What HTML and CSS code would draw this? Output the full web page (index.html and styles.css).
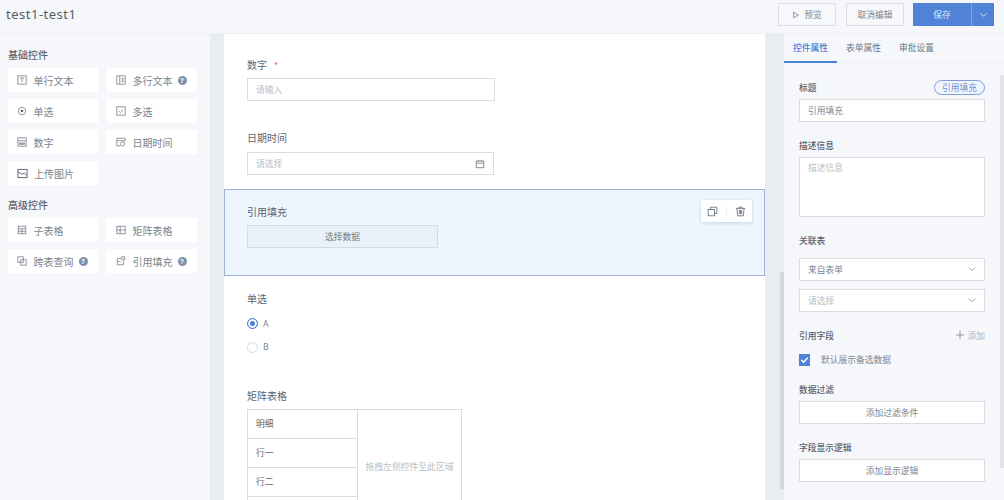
FILE: index.html
```html
<!DOCTYPE html>
<html lang="zh">
<head>
<meta charset="utf-8">
<title>test1-test1</title>
<link rel="stylesheet" href="styles.css">
</head>
<body>
<div class="app">
  <header class="topbar">
    <div class="title">test1-test1</div>
    <div class="actions">
      <button class="btn"><svg class="ic-play" viewBox="0 0 10 10"><path d="M2 1.500 8 5 2 8.500Z"/></svg>预览</button>
      <button class="btn">取消编辑</button>
      <div class="save"><span class="save-main">保存</span><span class="save-arrow"><svg viewBox="0 0 10 10"><path d="M1.500 3.500 5 7 8.500 3.500"/></svg></span></div>
    </div>
  </header>
  <div class="main">
    <aside class="palette">
      <h3 class="pal-title">基础控件</h3>
      <div class="pal-grid">
        <div class="pal-item"><svg class="pi" viewBox="0 0 12 12"><rect x="1" y="1" width="10" height="10"/><path d="M3.500 3.500h5M6 3.500v5"/></svg>单行文本</div>
        <div class="pal-item"><svg class="pi" viewBox="0 0 12 12"><rect x="1" y="1" width="10" height="10"/><path d="M4.500 1v10M6.500 4h3M6.500 6h3M6.500 8h3"/></svg>多行文本<span class="help">?</span></div>
        <div class="pal-item"><svg class="pi" viewBox="0 0 12 12"><circle cx="6" cy="6" r="4.500"/><circle class="fill" cx="6" cy="6" r="1.600"/></svg>单选</div>
        <div class="pal-item"><svg class="pi" viewBox="0 0 12 12"><rect x="1" y="1" width="10" height="10"/><path d="M3.500 6 5.500 8 8.500 4"/></svg>多选</div>
        <div class="pal-item"><svg class="pi" viewBox="0 0 12 12"><rect x="1" y="1" width="10" height="10"/><path d="M1 4.500h10M3 7h1.500v2H3zM5.500 7H7v2H5.500zM8 7h1v2H8z"/></svg>数字</div>
        <div class="pal-item"><svg class="pi" viewBox="0 0 12 12"><path d="M5 10.500H1v-9h10V5M1 4.500h10"/><circle cx="8" cy="8.300" r="2.500"/></svg>日期时间</div>
        <div class="pal-item"><svg class="pi wide" viewBox="0 0 12 12"><rect x="1" y="1.500" width="10" height="9"/><path d="M1 4 5.500 7 8 5.500 11 8"/></svg>上传图片</div>
      </div>
      <h3 class="pal-title second">高级控件</h3>
      <div class="pal-grid">
        <div class="pal-item"><svg class="pi" viewBox="0 0 12 12"><rect x="1.500" y="1.500" width="9" height="9"/><path d="M1.500 4.500h9M1.500 7.500h9M6 4.500v6"/></svg>子表格</div>
        <div class="pal-item"><svg class="pi" viewBox="0 0 12 12"><rect x="1" y="1.500" width="10" height="9"/><path d="M1 6h10M5 1.500v9"/></svg>矩阵表格</div>
        <div class="pal-item"><svg class="pi" viewBox="0 0 12 12"><rect x="1" y="1" width="6.500" height="6.500"/><rect x="4.500" y="4.500" width="6.500" height="6.500"/></svg>跨表查询<span class="help">?</span></div>
        <div class="pal-item"><svg class="pi" viewBox="0 0 12 12"><path d="M6 3H1.500v7.500h7.500V6M1.500 6.500h4"/><rect x="7" y="1" width="3.500" height="3.500"/></svg>引用填充<span class="help">?</span></div>
      </div>
    </aside>

    <section class="canvas-wrap">
      <div class="canvas">
        <div class="field f-num">
          <div class="f-label">数字<span class="req">*</span></div>
          <div class="inp">请输入</div>
        </div>
        <div class="field f-date">
          <div class="f-label">日期时间</div>
          <div class="inp inp-date">请选择<svg class="cal" viewBox="0 0 12 12"><rect x="1.500" y="2.500" width="9" height="8"/><path d="M1.500 5h9M4 1v2M8 1v2"/></svg></div>
        </div>
        <div class="field-sel">
          <div class="f-label">引用填充</div>
          <div class="pick">选择数据</div>
          <div class="tools">
            <svg class="tool" viewBox="0 0 14 14"><rect x="1.500" y="4.500" width="8" height="8"/><path d="M4.500 4.500v-3h8v8h-3"/></svg>
            <span class="tool-sep"></span>
            <svg class="tool" viewBox="0 0 14 14"><path d="M1 3h12M5 3V1.500h4V3M2.500 3l.8 9.500h7.400l.8-9.500M5.500 5v5.500M7 5v5.500M8.500 5v5.500"/></svg>
          </div>
        </div>
        <div class="field f-radio">
          <div class="f-label">单选</div>
          <div class="radio"><span class="dot on"></span>A</div>
          <div class="radio"><span class="dot"></span>B</div>
        </div>
        <div class="field f-matrix">
          <div class="f-label">矩阵表格</div>
          <div class="matrix">
            <div class="m-col">
              <div class="m-cell">明细</div>
              <div class="m-cell">行一</div>
              <div class="m-cell">行二</div>
              <div class="m-cell"></div>
            </div>
            <div class="m-drop">拖拽左侧控件至此区域</div>
          </div>
        </div>
      </div>
      <div class="sb-center"></div>
    </section>

    <aside class="props">
      <nav class="tabs">
        <span class="tab active">控件属性</span>
        <span class="tab">表单属性</span>
        <span class="tab">审批设置</span>
      </nav>
      <div class="prop-body">
        <div class="p-head t1"><span>标题</span><span class="pill">引用填充</span></div>
        <div class="p-inp dark">引用填充</div>
        <div class="p-head t2"><span>描述信息</span></div>
        <div class="p-area">描述信息</div>
        <div class="p-head t3"><span>关联表</span></div>
        <div class="p-inp dark sel">来自表单<svg class="chev" viewBox="0 0 10 10"><path d="M1 3 5 7 9 3"/></svg></div>
        <div class="p-inp sel s2">请选择<svg class="chev" viewBox="0 0 10 10"><path d="M1 3 5 7 9 3"/></svg></div>
        <div class="p-head t4"><span>引用字段</span><span class="add"><svg class="plus" viewBox="0 0 10 10"><path d="M5 0v10M0 5h10"/></svg>添加</span></div>
        <div class="check"><span class="box"><svg viewBox="0 0 12 12"><path d="M2.500 6 5 8.500 9.500 3.500"/></svg></span>默认展示备选数据</div>
        <div class="p-head t5"><span>数据过滤</span></div>
        <div class="p-btn">添加过滤条件</div>
        <div class="p-head t6"><span>字段显示逻辑</span></div>
        <div class="p-btn">添加显示逻辑</div>
      </div>
      <div class="sb-right"></div>
    </aside>
  </div>
</div>
</body>
</html>
```
FILE: styles.css
```css
* { box-sizing: border-box; }
html, body { margin: 0; height: 500px; overflow: hidden; }
body { font-family: "Noto Sans CJK SC", "Noto Sans", sans-serif; font-size: 8.750px; color: #5c6470; background: #e9ecf1; }
.app { width: 1004px; height: 500px; display: flex; flex-direction: column; }

.topbar { height: 34px; flex: none; background: #f5f7fb; border-bottom: 1px solid #eef0f4; display: flex; align-items: flex-start; justify-content: space-between; padding: 3px 10px 0 6px; }
.title { font-family: "Noto Sans", sans-serif; font-size: 13px; line-height: 23px; letter-spacing: .5px; color: #555c66; }
.actions { display: flex; }
.btn { width: 58px; height: 23px; margin-right: 9px; padding: 0; font: inherit; color: #7d848e; background: #f7f8fb; border: 1px solid #dcdfe5; display: flex; align-items: center; justify-content: center; }
.btn:first-child { margin-right: 10px; }
.ic-play { width: 8px; height: 8px; margin-right: 4px; fill: none; stroke: #7d848e; stroke-width: 1; }
.save { width: 81px; height: 23px; background: #5082d8; color: #dfe8f8; display: flex; }
.save-main { flex: 1; display: flex; align-items: center; justify-content: center; }
.save-arrow { width: 23px; border-left: 1px solid #7ea2e2; display: flex; align-items: center; justify-content: center; }
.save-arrow svg { width: 9px; height: 9px; fill: none; stroke: #dfe8f8; stroke-width: 1; }

.main { flex: 1; display: flex; min-height: 0; }

.palette { width: 210px; flex: none; background: #f5f7fb; padding: 13px 0 0 8px; }
.pal-title { margin: 0 0 5px; font-size: 10px; font-weight: 500; line-height: 16px; color: #5c6470; }
.pal-title.second { margin-top: 12px; }
.pal-grid { display: grid; grid-template-columns: 90px 91px; grid-auto-rows: 24px; column-gap: 8px; row-gap: 7px; }
.pal-item { background: #fff; display: flex; align-items: center; padding-left: 9px; font-size: 10px; color: #7c838d; }
.pal-item:nth-child(even) { padding-left: 10px; }
.pi { width: 10px; height: 10px; margin-right: 6.500px; flex: none; fill: none; stroke: #7d848e; stroke-width: 1; }
.pi.wide { width: 11px; height: 11px; margin-right: 6px; stroke: #5c6470; }
.pi .fill { fill: #5c6470; stroke: none; }
.help { width: 9px; height: 9px; margin-left: 5px; border-radius: 50%; background: #7d90ab; color: #fff; font-size: 7px; line-height: 9px; text-align: center; font-weight: 700; font-family: "Liberation Sans", sans-serif; }

.canvas-wrap { width: 574px; flex: none; padding-left: 14px; position: relative; background: #e9ecf1; }
.canvas { width: 541px; height: 466px; background: #fff; overflow: hidden; }
.field { padding-left: 23px; }
.f-label { font-size: 10px; height: 16px; line-height: 16px; color: #5c6470; }
.req { color: #e26a6a; margin-left: 7px; font-size: 9px; }
.f-num { padding-top: 23px; height: 95px; }
.f-num .f-label { margin-bottom: 5px; }
.f-date { margin-top: 1px; height: 59px; }
.f-date .f-label { margin-bottom: 6px; }
.inp { width: 248px; height: 23px; border: 1px solid #d9dce1; padding-left: 8px; line-height: 21px; color: #b9bec6; background: #fff; }
.inp-date { width: 247px; display: flex; justify-content: space-between; padding-right: 8px; }
.cal { width: 10px; height: 10px; margin-top: 6px; fill: none; stroke: #727a85; stroke-width: 1; }

.field-sel { height: 87px; background: #edf5fd; border: 1px solid #9db3d9; padding: 14px 0 0 22px; position: relative; }
.field-sel .f-label { margin-bottom: 5px; }
.pick { width: 191px; height: 23px; background: #e8f0f8; border: 1px solid #d5dbe3; text-align: center; line-height: 21px; color: #727a85; }
.tools { position: absolute; top: 10px; right: 12px; width: 51px; height: 22px; background: #fff; box-shadow: 0 1px 3px rgba(90, 110, 140, .25); display: flex; align-items: center; justify-content: center; }
.tool { width: 11px; height: 11px; fill: none; stroke: #5c6470; stroke-width: 1; }
.tool-sep { width: 1px; height: 11px; background: #eceef1; margin: 0 8px; }

.f-radio { padding-top: 15px; height: 112px; }
.f-radio .f-label { margin-bottom: 5px; }
.radio { display: flex; align-items: center; height: 23.500px; font-family: "Noto Sans", sans-serif; color: #80868f; }
.dot { width: 11px; height: 11px; border: 1px solid #d6d9de; border-radius: 50%; margin-right: 5px; background: #fff; }
.dot.on { border-color: #4a7fd6; background: #4a7fd6; box-shadow: inset 0 0 0 2px #fff; }
.f-matrix .f-label { margin-bottom: 5px; }
.matrix { width: 215px; height: 120px; border: 1px solid #d9dce1; display: flex; }
.m-col { width: 110px; border-right: 1px solid #d9dce1; flex: none; }
.m-cell { height: 29px; border-bottom: 1px solid #d9dce1; padding-left: 8px; line-height: 28px; color: #5c6470; }
.m-drop { flex: 1; padding-top: 50px; text-align: center; font-size: 8.800px; line-height: 14px; color: #b9bec6; white-space: nowrap; }
.sb-center { position: absolute; left: 570px; top: 238px; width: 4px; height: 217px; background: #d5d8dd; }

.props { flex: 1; background: #f5f7fb; position: relative; }
.tabs { height: 29px; border-bottom: 1px solid #eceef2; display: flex; }
.tab { width: 53px; text-align: center; line-height: 28px; color: #727a85; height: 29px; }
.tab.active { color: #4a7fd6; border-bottom: 2px solid #4a7fd6; font-weight: 500; }
.prop-body { padding: 0 19px 0 15px; }
.p-head { display: flex; justify-content: space-between; align-items: center; height: 16px; color: #5c6470; font-weight: 500; }
.t1 { margin-top: 16px; margin-bottom: 4px; }
.t2 { margin-top: 15px; margin-bottom: 4px; }
.t3 { margin-top: 15px; margin-bottom: 10px; }
.t4 { margin-top: 15px; margin-bottom: 10px; }
.t5 { margin-top: 15px; margin-bottom: 4px; }
.t6 { margin-top: 15px; margin-bottom: 4px; }
.pill { width: 51px; height: 15px; border: 1px solid #7e9fd8; border-radius: 8px; color: #6d90cc; background: #f0f5fd; text-align: center; line-height: 13px; font-weight: 400; }
.p-inp { height: 23px; border: 1px solid #d9dce1; background: #fff; padding-left: 8px; line-height: 21px; color: #b9bec6; display: flex; justify-content: space-between; }
.p-inp.dark { color: #80868f; }
.s2 { margin-top: 8px; }
.sel { padding-right: 8px; }
.chev { width: 8px; height: 8px; margin-top: 6px; fill: none; stroke: #727a85; stroke-width: .9; }
.p-area { height: 60px; border: 1px solid #d9dce1; background: #fff; padding-left: 8px; line-height: 19px; color: #b9bec6; }
.add { display: flex; align-items: center; color: #b0b5bd; font-weight: 400; }
.plus { width: 8px; height: 8px; margin-right: 4px; fill: none; stroke: #80868f; stroke-width: 1; }
.check { display: flex; align-items: center; height: 13px; color: #80868f; }
.box { width: 11px; height: 12px; margin-right: 11px; background: #5082d8; flex: none; display: flex; }
.box svg { width: 11px; height: 12px; fill: none; stroke: #fff; stroke-width: 1.600; }
.p-btn { height: 23px; border: 1px solid #d9dce1; background: #fff; text-align: center; line-height: 21px; color: #80868f; }
.sb-right { position: absolute; right: 0; top: 41px; width: 4px; height: 393px; background: #e2e4e8; }
```
